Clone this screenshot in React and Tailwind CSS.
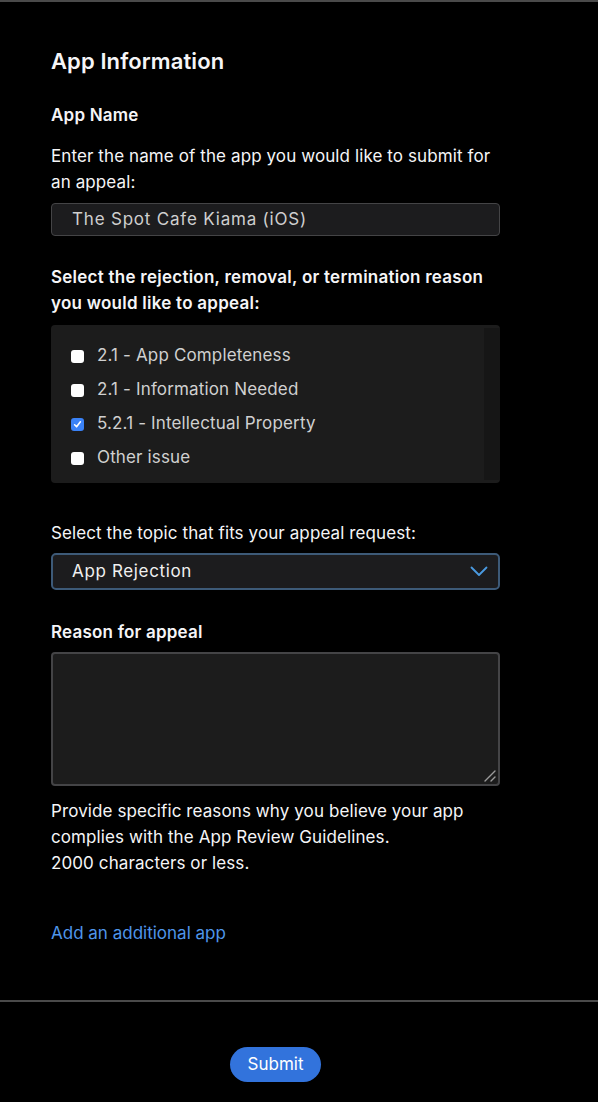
import React from "react";

function Box({ checked }) {
  if (checked) {
    return (
      <span className="flex h-[13px] w-[13px] items-center justify-center rounded-[3px] bg-[#3a82f7]">
        <svg width="9" height="9" viewBox="0 0 9 9" fill="none">
          <path d="M1.6 4.8 L3.6 6.8 L7.4 1.8" stroke="white" strokeWidth="1.6" strokeLinecap="round" strokeLinejoin="round" />
        </svg>
      </span>
    );
  }
  return <span className="h-[13px] w-[13px] rounded-[3px] bg-white" />;
}

export default function App() {
  const items = [
    ["2.1 - App Completeness", false],
    ["2.1 - Information Needed", false],
    ["5.2.1 - Intellectual Property", true],
    ["Other issue", false],
  ];
  return (
    <div
      className="min-h-[1102px] w-[598px] bg-black text-[#f5f5f7]"
      style={{ fontFamily: "Inter, 'Liberation Sans', sans-serif" }}
    >
      <div className="h-[2px] w-full bg-[#4a4a4a]" />
      <div className="ml-[51px] w-[449px] pt-[43px]">
        <h1 className="text-[22px] font-semibold leading-[32px] tracking-[0.1px]">App Information</h1>
        <div className="mt-[27px] text-[17px] font-semibold leading-[22px] tracking-[0.2px]">App Name</div>
        <p className="mt-[17px] text-[17px] leading-[26px] tracking-[0.1px]">
          Enter the name of the app you would like to submit for an appeal:
        </p>
        <div className="mt-[8px] flex h-[33px] items-center rounded-[4px] border border-[#444446] bg-[#1c1c1e] px-[20px] text-[17px] tracking-[0.8px] text-[#cfcfcf]">
          The Spot Cafe Kiama (iOS)
        </div>
        <p className="mt-[28px] text-[17px] font-semibold leading-[26px] tracking-[0.25px]">
          Select the rejection, removal, or termination reason you would like to appeal:
        </p>
        <div className="mt-[9px] flex h-[158px] rounded-[4px] bg-[#1c1c1c] py-[3px]">
          <div className="flex flex-1 flex-col gap-[12px] pl-[20px] pt-[17px]">
            {items.map(([label, checked]) => (
              <div key={label} className="flex h-[22px] items-center gap-[13px] text-[17px] tracking-[0.15px] text-[#d0d0d0]">
                <Box checked={checked} />
                <span>{label}</span>
              </div>
            ))}
          </div>
          <div className="w-[16px] bg-[#161616]" />
        </div>
        <p className="mt-[37px] text-[17px] leading-[26px] tracking-[0.1px]">
          Select the topic that fits your appeal request:
        </p>
        <div className="mt-[7px] flex h-[37px] items-center justify-between rounded-[5px] border-2 border-[#3d5a78] bg-[#1c1c1e] pl-[19px] pr-[10px] text-[17px] tracking-[0.65px] text-[#f0f0f0]">
          <span>App Rejection</span>
          <svg width="18" height="11" viewBox="0 0 18 11" fill="none">
            <path d="M1.5 1.5 L9 9 L16.5 1.5" stroke="#4a9ae0" strokeWidth="1.8" strokeLinecap="round" strokeLinejoin="round" />
          </svg>
        </div>
        <div className="mt-[31px] text-[17px] font-semibold leading-[22px] tracking-[0.2px]">Reason for appeal</div>
        <div className="relative mt-[9px] h-[134px] rounded-[4px] border-2 border-[#444446] bg-[#1c1c1c]">
          <svg className="absolute bottom-[1px] right-[1px]" width="14" height="14" viewBox="0 0 14 14" fill="none">
            <path d="M2 12 L12 2 M8 12 L12 8" stroke="#9a9a9a" strokeWidth="1.4" strokeLinecap="round" />
          </svg>
        </div>
        <p className="mt-[12px] text-[17px] leading-[26px] tracking-[0.1px]">
          Provide specific reasons why you believe your app complies with the App Review Guidelines.
          <br />
          2000 characters or less.
        </p>
        <div className="mt-[44px] text-[17px] leading-[26px] tracking-[0px] text-[#4f96ea]">Add an additional app</div>
      </div>
      <div className="mt-[54px] h-[2px] w-full bg-[#4a4a4a]" />
      <div className="ml-[51px] flex w-[449px] justify-center pt-[45px]">
        <button className="h-[35px] rounded-full bg-[#3273dc] px-[18px] text-[17px] text-white">
          Submit
        </button>
      </div>
    </div>
  );
}
